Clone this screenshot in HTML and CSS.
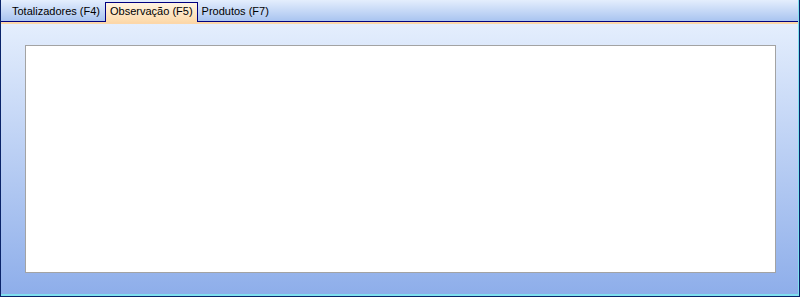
FILE: index.html
```html
<!DOCTYPE html>
<html lang="pt-BR">
<head>
    <meta charset="UTF-8">
    <title>Observação</title>
    <link rel="stylesheet" href="styles.css">
</head>
<body>

<div class="frame">
    <div class="tabs">
        <div class="tab">Totalizadores (F4)</div>
        <div class="tab active">Observação (F5)</div>
        <div class="tab">Produtos (F7)</div>
    </div>
    <div class="tab-line"></div>
    <div class="page">
        <textarea class="memo"></textarea>
    </div>
</div>

</body>
</html>
```

FILE: styles.css
```css
html, body {
    margin: 0;
    height: 100%;
}
body {
    font-family: Tahoma, "Liberation Sans", sans-serif;
    font-size: 11px;
    background-color: #8eaeea;
}
.frame {
    box-sizing: border-box;
    height: 297px;
    display: flex;
    flex-direction: column;
    border-left: 1px solid #0a246a;
    border-right: 1px solid #0a246a;
    border-bottom: 1px solid #0a246a;
    box-shadow: inset -1px -1px 0 #7fe0f0, inset 0 -2px 0 #7fe0f0;
}
.tabs {
    height: 21px;
    display: flex;
    align-items: flex-end;
    padding-left: 7px;
    background: linear-gradient(#e4eefd, #a9c4f0);
    border-bottom: 1px solid #00007f;
    margin-right: 1px;
}
.tab {
    height: 18px;
    line-height: 17px;
    padding: 0 5px 0 4px;
    color: #000;
    white-space: nowrap;
}
.active {
    margin-bottom: -1px;
    height: 19px;
    padding: 0 4px 0 4px;
    border: 1px solid #00007f;
    border-bottom: none;
    background: linear-gradient(#fff4e2, #fcd9aa);
}
.tab-line {
    height: 2px;
    background-color: #fcd7a9;
    margin-right: 1px;
}
.page {
    flex: 1;
    display: flex;
    padding: 21px 22px 21px 24px;
    background: linear-gradient(#e4eefd, #8eaeea);
    margin-right: 1px;
    margin-bottom: 2px;
}
.memo {
    flex: 1;
    margin: 0;
    resize: none;
    border: 1px solid #a3a3a3;
    background-color: #fff;
    outline: none;
}
```
